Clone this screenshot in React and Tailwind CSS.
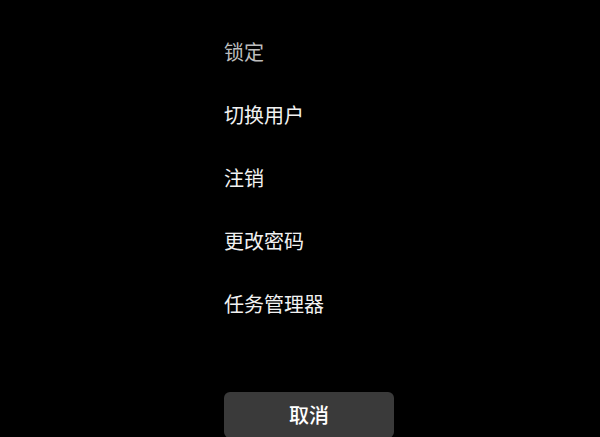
export default function App() {
  const items = ['锁定', '切换用户', '注销', '更改密码', '任务管理器'];

  return (
    <div
      className="h-[437px] w-[600px] overflow-hidden bg-black"
      style={{ fontFamily: '"Noto Sans CJK SC", "Noto Sans", sans-serif' }}
    >
      <div className="flex flex-col pl-[224px] pt-[20px]">
        {items.map((label, i) => (
          <div
            key={label}
            className={`flex h-[63px] items-center text-[20px] ${
              i === 0 ? 'text-[#bdbdbd]' : 'text-[#f2f2f2]'
            }`}
          >
            {label}
          </div>
        ))}
        <button className="mt-[57px] flex h-[46px] w-[170px] items-center justify-center rounded-md bg-[#3a3a3a] text-[20px] font-medium text-white">
          取消
        </button>
      </div>
    </div>
  );
}
